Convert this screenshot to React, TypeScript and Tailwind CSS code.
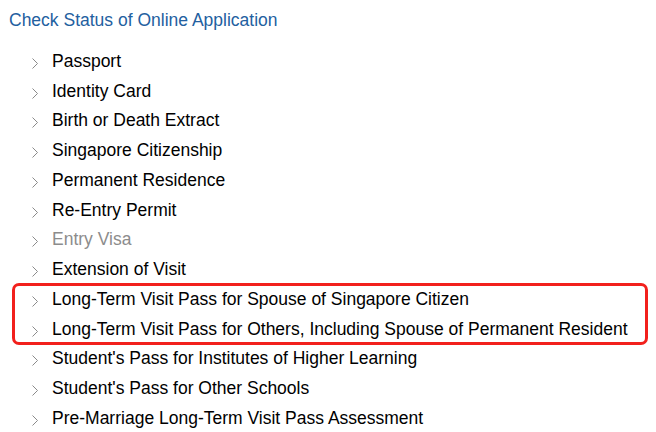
import React from "react";

const items = [
  { label: "Passport" },
  { label: "Identity Card" },
  { label: "Birth or Death Extract" },
  { label: "Singapore Citizenship" },
  { label: "Permanent Residence" },
  { label: "Re-Entry Permit" },
  { label: "Entry Visa", muted: true },
  { label: "Extension of Visit" },
  { label: "Long-Term Visit Pass for Spouse of Singapore Citizen" },
  { label: "Long-Term Visit Pass for Others, Including Spouse of Permanent Resident" },
  { label: "Student's Pass for Institutes of Higher Learning" },
  { label: "Student's Pass for Other Schools" },
  { label: "Pre-Marriage Long-Term Visit Pass Assessment" },
];

function Chevron() {
  return (
    <svg width="8" height="13" viewBox="0 0 8 13" className="shrink-0 mt-[5px]">
      <path d="M1.5 1.5 L6.5 6.5 L1.5 11.5" fill="none" stroke="#8a8a8a" strokeWidth="1" />
    </svg>
  );
}

function Row({ label, muted, inset = 31 }: { label: string; muted?: boolean; inset?: number }) {
  return (
    <li className={`flex items-center h-[29.75px] ${inset === 31 ? "pl-[31px]" : "pl-[18px]"}`}>
      <Chevron />
      <span className={`ml-[13px] whitespace-nowrap ${muted ? "text-[#8c8c8c]" : "text-black"}`}>{label}</span>
    </li>
  );
}

export default function App() {
  const before = items.slice(0, 8);
  const boxed = items.slice(8, 10);
  const after = items.slice(10);
  return (
    <div className="w-[656px] h-[432px] bg-white overflow-hidden font-['Liberation_Sans',Arial,sans-serif] text-[17.5px]">
      <h1 className="pl-[9px] pt-[7px] h-[44px] text-[#23609f] text-[17.5px]">Check Status of Online Application</h1>
      <ul className="mt-[2px]">
        {before.map((it) => (
          <Row key={it.label} label={it.label} muted={it.muted} />
        ))}
      </ul>
      {/* highlighted pair */}
      <ul className="ml-[13px] w-[634px] rounded-[6px] outline-solid outline-[3px] outline-[#f2201c] outline-offset-[-2px]">
        {boxed.map((it) => (
          <Row key={it.label} label={it.label} inset={18} />
        ))}
      </ul>
      <ul>
        {after.map((it) => (
          <Row key={it.label} label={it.label} />
        ))}
      </ul>
    </div>
  );
}
